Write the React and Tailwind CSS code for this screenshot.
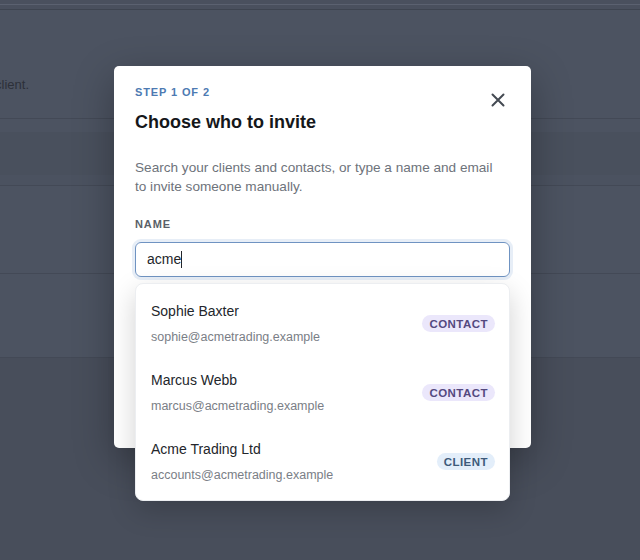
import React from "react";

const font = { fontFamily: '"Liberation Sans", Arial, Helvetica, sans-serif' };

function CloseIcon() {
  return (
    <svg width="14" height="14" viewBox="0 0 14 14" fill="none">
      <path d="M1.5 1.5 L12.5 12.5 M12.5 1.5 L1.5 12.5" stroke="#444a52" strokeWidth="2" strokeLinecap="round" />
    </svg>
  );
}

const results = [
  { name: "Sophie Baxter", email: "sophie@acmetrading.example", kind: "contact" },
  { name: "Marcus Webb", email: "marcus@acmetrading.example", kind: "contact" },
  { name: "Acme Trading Ltd", email: "accounts@acmetrading.example", kind: "client" },
];

function Badge({ kind }) {
  if (kind === "client") {
    return (
      <span className="h-[17px] px-[7px] rounded-full bg-[#e3eefa] text-[#3d5a7a] text-[11.5px] font-bold tracking-[0.04em] leading-4 flex items-center">
        CLIENT
      </span>
    );
  }
  return (
    <span className="h-[17px] px-[7px] rounded-full bg-[#ebe7fb] text-[#54497f] text-[11.5px] font-bold tracking-[0.04em] leading-4 flex items-center">
      CONTACT
    </span>
  );
}

function Suggestions() {
  return (
    <div className="absolute left-0 right-0 top-full mt-[6px] bg-white rounded-lg border border-[#eceef1] shadow-[0_10px_28px_rgba(0,0,0,0.18)] pt-[5px] pb-[4px] z-10">
      {results.map((r) => (
        <div key={r.email} className="flex items-center justify-between pl-[15px] pr-[14px] py-3">
          <div className="flex flex-col">
            <span className="text-[14px] leading-5 text-[#23262b]">{r.name}</span>
            <span className="mt-[7px] text-[12.5px] leading-[18px] text-[#7a7e86]">{r.email}</span>
          </div>
          <Badge kind={r.kind} />
        </div>
      ))}
    </div>
  );
}

function InviteDialog() {
  return (
    <div className="w-[417px] bg-white rounded-[5px] shadow-[0_12px_40px_rgba(0,0,0,0.3)] px-[21px] pt-[19px] pb-[21px]">
      <div className="flex items-start justify-between">
        <div className="flex flex-col">
          <span className="text-[11px] leading-[14px] font-bold tracking-[0.08em] text-[#4d7ab2]">STEP 1 OF 2</span>
          <h2 className="mt-[11px] text-[18px] leading-6 font-bold text-[#15171a]">Choose who to invite</h2>
        </div>
        <button className="mt-[3px] w-6 h-6 flex items-center justify-center">
          <CloseIcon />
        </button>
      </div>

      <p className="mt-[24px] max-w-[366px] text-[13.6px] leading-[19px] text-[#6e737b]">
        Search your clients and contacts, or type a name and email to invite someone manually.
      </p>

      <div className="mt-[21px] text-[11px] leading-[14px] font-bold tracking-[0.08em] text-[#5a5f68]">NAME</div>
      <div className="relative mt-[11px]">
        <div className="h-[35px] rounded-[6px] border border-[#6f93c2] shadow-[0_0_0_3px_rgba(120,160,210,0.18)] flex items-center pl-[11px] pr-3 text-[14px] text-[#23262b]">
          <span>acme</span>
          <span className="w-px h-[17px] bg-[#23262b]" />
        </div>
        <Suggestions />
      </div>

      <div className="mt-[20px] text-[11px] leading-[14px] font-bold tracking-[0.08em] text-[#5a5f68]">EMAIL</div>
      <div className="mt-[8px] h-[35px] rounded-[6px] border border-[#d4d8de]" />

      <div className="mt-[35px] flex justify-end gap-2">
        <button className="h-[38px] px-4 rounded-[6px] border border-[#d4d8de] text-[13px] text-[#3a3e45]">Cancel</button>
        <button className="h-[38px] px-4 rounded-[6px] border border-[#d4d8de] bg-[#f3f4f6] text-[13px] text-[#3a3e45]">Continue</button>
      </div>
    </div>
  );
}

function Backdrop() {
  return (
    <div className="flex flex-col h-full bg-[#4c5361]">
      <div className="h-[4px] bg-[#4a505e]" />
      <div className="h-px bg-[#5b6170]" />
      <div className="h-[4px] bg-[#4a505e]" />
      <div className="h-px bg-[#3e4450]" />
      <div className="h-[108px] flex items-end pb-[24px]">
        <div className="w-[29px] overflow-hidden flex justify-end">
          <span className="whitespace-nowrap text-[13px] text-[#2c3039]">Portal access is shared with everyone at this client.</span>
        </div>
      </div>
      <div className="h-px bg-[#434956]" />
      <div className="h-[13px] bg-[#4c5361]" />
      <div className="h-[43px] bg-[#49505d]" />
      <div className="h-[10px] bg-[#4b5260]" />
      <div className="h-px bg-[#434956]" />
      <div className="h-[87px]" />
      <div className="h-px bg-[#434956]" />
      <div className="h-[83px]" />
      <div className="h-px bg-[#434956]" />
      <div className="flex-1 bg-[#484e5b]" />
    </div>
  );
}

export default function App() {
  return (
    <div className="relative w-[640px] h-[560px] overflow-hidden" style={font}>
      <Backdrop />
      <div className="absolute inset-0 flex justify-center pt-[66px] pl-[5px]">
        <div>
          <InviteDialog />
        </div>
      </div>
    </div>
  );
}
